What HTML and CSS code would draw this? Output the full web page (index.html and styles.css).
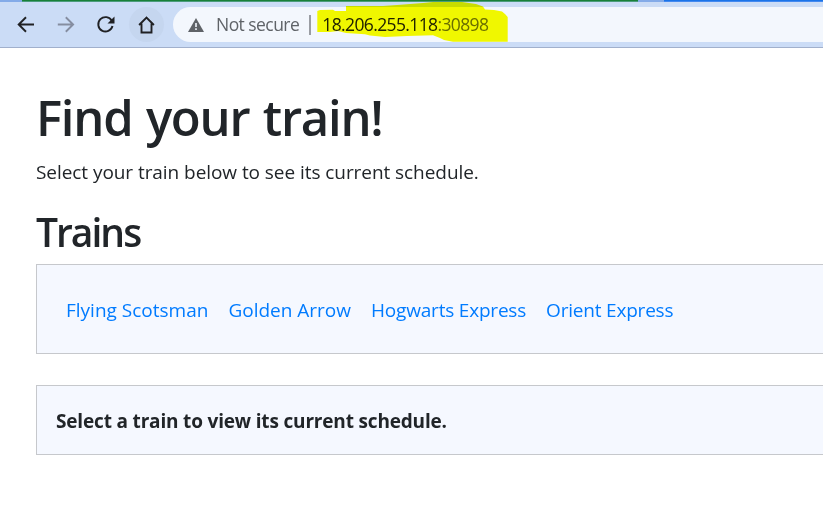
FILE: index.html
```html
<!DOCTYPE html>
<html lang="en">
<head>
<meta charset="utf-8">
<title>Find your train!</title>
<link rel="stylesheet" href="styles.css">
</head>
<body>
<header class="browser">
  <div class="tabs"><span class="tab-green"></span><span class="tab-blue"></span></div>
  <nav class="toolbar">
    <svg class="icon" viewBox="0 0 32 32"><path d="M16.500 8.800 9.200 16l7.300 7.200M9.200 16H24.500" /></svg>
    <svg class="icon forward" viewBox="0 0 32 32"><path d="M16.300 8.800 23.600 16 16.300 23.200M23.300 16H8.300" /></svg>
    <svg class="icon" viewBox="0 0 32 32"><path d="M22.300 12.300A7.200 7.200 0 1 0 23 17.500" /><path class="solid" d="M25 8v7h-7z" /></svg>
    <svg class="icon home" viewBox="0 0 32 32"><path d="M8.600 16.500 16 9l7.400 7.500M11 15v9h10v-9" /></svg>
    <div class="address">
      <svg class="warning" viewBox="0 0 16 14"><path d="M8 0 16 14H0z" /><path class="mark" d="M7.200 5h1.600v4H7.200zM7.200 10.300h1.600v1.600H7.200z" /></svg>
      <span class="security">Not secure</span>
      <span class="divider"></span>
      <span class="url">18.206.255.118<span class="port">:30898</span></span>
      <svg class="marker" viewBox="317 2 191 40"><path d="M317.300 11 320 10 333 9.700 335 11 346 11V6H383L397 5 423 3 433 2H462L476 4 483 6.500 485 9.500 494 10 502 11.500 505 14 507.700 17V41.700H453L444 40 440 38 433 35.300 407 36 385 37 370 35.500 365 34.300 346 33 338 31 330 32H317.300z" /></svg>
    </div>
  </nav>
</header>
<main class="page">
  <h1>Find your train!</h1>
  <p class="lead">Select your train below to see its current schedule.</p>
  <h2>Trains</h2>
  <section class="panel trains">
    <a>Flying Scotsman</a>
    <a>Golden Arrow</a>
    <a class="tight">Hogwarts Express</a>
    <a class="tight">Orient Express</a>
  </section>
  <section class="panel schedule"><strong>Select a train to view its current schedule.</strong></section>
</main>
</body>
</html>
```
FILE: styles.css
```css
* { box-sizing: border-box; }
body { margin: 0; height: 530px; overflow: hidden; background: #fff; color: #212529; font-family: "Open Sans", "Noto Sans", sans-serif; font-size: 19px; line-height: 30px; }
.browser { height: 48px; background: #cbdcf6; border-bottom: 1px solid #a1b0cc; }
.tabs { display: flex; height: 2px; background: #84abe8; }
.tab-green { width: 616px; margin-left: 22px; background: #188038; border-bottom: 1px solid #4b9c7b; }
.tab-blue { flex: 1; margin-left: 26px; background: #1a73e8; border-bottom: 1px solid #4288ef; }
.toolbar { display: flex; align-items: center; height: 45px; padding-left: 8px; gap: 5px; }
.icon { flex: none; width: 35px; height: 35px; padding: 1.500px; fill: none; stroke: #202124; stroke-width: 1.900; }
.icon .solid { fill: #202124; stroke: none; }
.forward { stroke: #858da0; }
.home { margin-left: 1px; border-radius: 50%; background: #c5d6ef; }
.address { position: relative; flex: 1; display: flex; align-items: center; height: 35px; margin-left: 4px; padding-left: 15px; border-radius: 18px 0 0 18px; background: #f3f7fd; font-size: 17.500px; }
.warning { width: 16px; height: 14px; fill: #5f6368; }
.warning .mark { fill: #f3f7fd; }
.security { margin-left: 12px; padding-bottom: 1px; color: #5f6368; letter-spacing: -0.550px; white-space: nowrap; }
.divider { width: 2px; height: 20px; margin: 0 11px 0 10px; background: #9a9da3; }
.url { padding-bottom: 1px; color: #202124; letter-spacing: -0.620px; white-space: nowrap; }
.port { color: #6b6e74; }
.marker { position: absolute; left: 144px; top: -5px; width: 191px; height: 40px; fill: #fcff00; mix-blend-mode: multiply; }
.page { padding: 39px 0 0 36px; }
h1 { margin: 0; font-size: 49px; line-height: 60px; font-weight: 600; letter-spacing: -1.250px; word-spacing: 2px; white-space: nowrap; }
.lead { margin: 10px 0 0; letter-spacing: -0.060px; white-space: nowrap; }
h2 { margin: 21px 0 8px; font-size: 39px; line-height: 48px; font-weight: 600; letter-spacing: -2px; }
.panel { border: 1px solid #c6c8cc; border-right: 0; background: #f5f8ff; white-space: nowrap; }
.trains { display: flex; align-items: center; height: 90px; padding: 2px 0 0 29px; gap: 20px; color: #007bff; }
.tight { letter-spacing: -0.200px; }
.schedule { display: flex; align-items: center; height: 70px; margin-top: 31px; padding: 2px 0 0 19px; letter-spacing: -0.170px; }
```
